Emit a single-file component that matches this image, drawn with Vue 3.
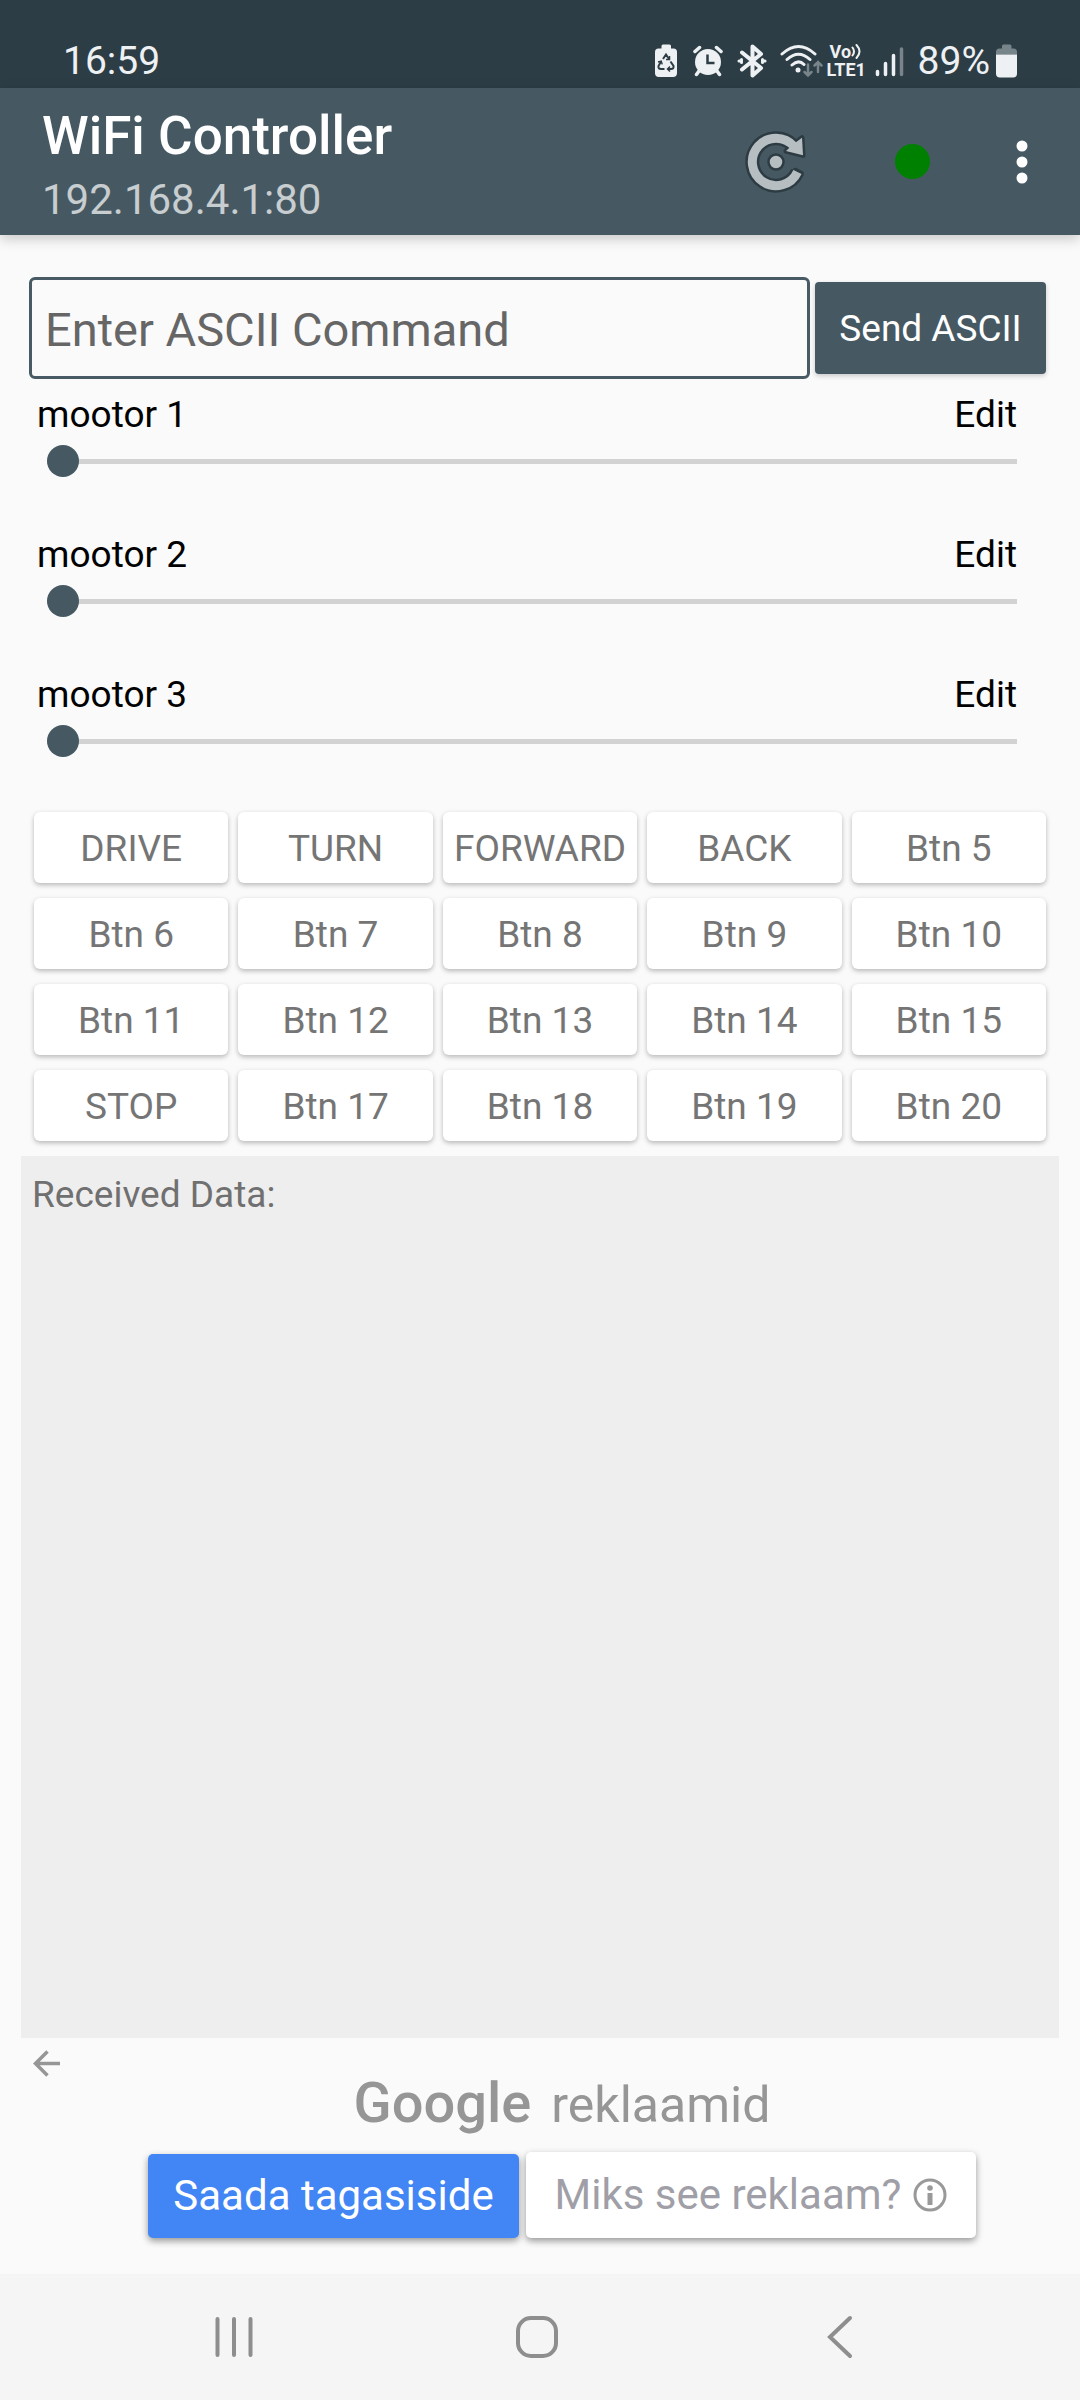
<script setup>
import { ref } from 'vue'

const command = ref('')
const sliders = ref([
  { id: 'motor-1', name: 'mootor 1', value: 0 },
  { id: 'motor-2', name: 'mootor 2', value: 0 },
  { id: 'motor-3', name: 'mootor 3', value: 0 },
])
const named = { 1: 'DRIVE', 2: 'TURN', 3: 'FORWARD', 4: 'BACK', 16: 'STOP' }
const buttons = Array.from({ length: 20 }, (_, i) => named[i + 1] || `Btn ${i + 1}`)
</script>

<template>
  <div class="screen">
    <div class="status">
      <span class="clock">16:59</span>
      <div class="tray">
        <svg class="recycle" width="22" height="34" viewBox="0 0 22 34">
          <path d="M6.500 4.500V2q0-1.500 1.500-1.500h6.500q1.500 0 1.500 1.500v2.500h2.500q3.500 0 3.500 3.500v21q0 4-4 4h-14q-4 0-4-4V8q0-3.500 3.500-3.500z" fill="#eef1f3" />
          <g fill="none" stroke="#2d3d45" stroke-width="2">
            <path d="M8 15l3-4.500 3 4.500M15.500 17.500l3 4.500q.5 3-2.500 3h-3M9.500 25H6q-3 0-2.500-3L6 17.500" />
            <path d="M14.500 12v3.500H11M15 22.500L12.500 25l2.500 2.500M3 18l3.200-.8 1 3.200" stroke-width="1.500" />
          </g>
        </svg>
        <svg class="alarm" width="30" height="32" viewBox="0 0 30 32">
          <circle cx="15" cy="17" r="13" fill="#eef1f3" />
          <path d="M2 6.500L6.500 2.500M28 6.500l-4.500-4M6 26l-2.500 3.500M24 26l2.500 3.500" stroke="#eef1f3" stroke-width="3.500" stroke-linecap="round" />
          <path d="M14.500 9.500v8.500h7" fill="none" stroke="#2d3d45" stroke-width="2.500" />
        </svg>
        <svg class="bt" width="30" height="34" viewBox="0 0 30 34" fill="none" stroke="#eef1f3" stroke-width="4" stroke-linecap="round" stroke-linejoin="round">
          <path d="M5 8.500L24 24l-8.500 7.500V2.500L24 10 5 25.500" />
          <path d="M2 17h2.500M25.500 17H28M4.500 15.500v3M25.500 15.500v3" stroke-width="3" />
        </svg>
        <svg class="wifi" width="44" height="34" viewBox="0 0 44 34" fill="none" stroke="#eef1f3" stroke-width="3" stroke-linecap="round">
          <path d="M2 10Q18.500-5 35 10M7 15.500q11.500-10.500 23 0M12 21q6.500-6 12 -.5" />
          <circle cx="18" cy="26" r="2.500" fill="#eef1f3" stroke="none" />
          <path d="M28 20.500v11M24.500 28l3.500 3.500 3.500-3.500M38 28V18M34.500 21.500L38 18l3.500 3.500" stroke="#77858b" stroke-width="2.500" />
        </svg>
        <span class="volte">
          <span class="vo">Vo<svg width="11" height="17" viewBox="0 0 11 17" fill="none" stroke="#eef1f3" stroke-width="2" stroke-linecap="round"><path d="M1.500 4.500q3 4 0 8M5.500 2q6 6.500 0 13" /></svg></span>
          <span>LTE1</span>
        </span>
        <svg class="signal" width="29" height="31" viewBox="0 0 29 31" stroke="#eef1f3" stroke-width="3.500" stroke-linecap="round">
          <path d="M2.500 25.500v3M10.500 17.500v11M18.500 9.500v19" />
          <path d="M26.500 3v25.500" stroke="#77858b" />
        </svg>
        <span class="percent">89%</span>
        <svg width="22" height="34" viewBox="0 0 22 34">
          <path d="M0 10.500V8q0-3.500 3.500-3.500H6V2Q6 .500 7.500.500h6.500q1.500 0 1.500 1.500v2.500h2q3.500 0 3.500 3.500v2.500z" fill="#77858b" />
          <path d="M0 10.500h21v19q0 4-4 4H4q-4 0-4-4z" fill="#eef1f3" />
        </svg>
      </div>
    </div>

    <header class="appbar">
      <div class="titles">
        <h1>WiFi Controller</h1>
        <p>192.168.4.1:80</p>
      </div>
      <button class="action" aria-label="Reconnect">
        <svg width="64" height="64" viewBox="0 0 64 64">
          <g fill="none" stroke="#2d3b42" stroke-linejoin="round">
            <path d="M54.600 39.300l-3.200 6A23.700 23.700 0 1 1 49 15.200" stroke="none" />
            <path d="M53.500 42A23.700 23.700 0 1 1 48.800 15.200" stroke-width="14" />
            <path d="M51.300 40.300l6 3.200" stroke-width="5" stroke-linecap="round" />
            <path d="M58 7.700L59 25.300 42 21l4.300-4 6-5z" fill="#b6bec2" stroke-width="5" />
          </g>
          <path d="M53.500 42A23.700 23.700 0 1 1 50 16.500" fill="none" stroke="#b6bec2" stroke-width="9" />
          <path d="M58 7.700L59 25.300 42 21l4.300-4 6-5z" fill="#b6bec2" />
          <circle cx="32" cy="32" r="7.500" fill="#b6bec2" stroke="#2d3b42" stroke-width="2.500" />
        </svg>
      </button>
      <button class="action" aria-label="Connected"><span class="dot"></span></button>
      <button class="more" aria-label="More options">
        <svg width="12" height="44" viewBox="0 0 12 44" fill="#fff"><circle cx="6" cy="6" r="5.500" /><circle cx="6" cy="22" r="5.500" /><circle cx="6" cy="38" r="5.500" /></svg>
      </button>
    </header>

    <main>
      <form class="command" @submit.prevent>
        <input v-model="command" type="text" placeholder="Enter ASCII Command" aria-label="ASCII command" />
        <button type="submit">Send ASCII</button>
      </form>

      <div class="sliders">
        <div v-for="s in sliders" :key="s.id" class="slider">
          <div class="row">
            <label :for="s.id">{{ s.name }}</label>
            <button type="button">Edit</button>
          </div>
          <input :id="s.id" v-model="s.value" type="range" min="0" max="100" />
        </div>
      </div>

      <div class="grid">
        <button v-for="b in buttons" :key="b" type="button">{{ b }}</button>
      </div>

      <section class="received">Received Data:</section>
    </main>

    <aside class="ad">
      <button class="ad-back" aria-label="Back">
        <svg width="27" height="27" viewBox="0 0 27 27" fill="none" stroke="#969696" stroke-width="3.500"><path d="M27 13.500H3M14.500 1.500l-12 12 12 12" /></svg>
      </button>
      <div class="ad-body">
        <p class="ad-title"><span class="google">Google</span><span>reklaamid</span></p>
        <div class="ad-actions">
          <button class="feedback">Saada tagasiside</button>
          <button class="why">Miks see reklaam?
            <svg width="34" height="34" viewBox="0 0 34 34"><circle cx="17" cy="17" r="15" fill="none" stroke="#999" stroke-width="3" /><circle cx="17" cy="10" r="2.800" fill="#999" /><path d="M17 15v12" stroke="#999" stroke-width="5" /></svg>
          </button>
        </div>
      </div>
    </aside>

    <nav class="navbar">
      <button aria-label="Recent apps">
        <svg width="44" height="44" viewBox="0 0 44 44" stroke="#8e8e8e" stroke-width="4" stroke-linecap="round"><path d="M5.500 4v36M22 4v36M38.500 4v36" /></svg>
      </button>
      <button aria-label="Home">
        <svg width="44" height="44" viewBox="0 0 44 44" fill="none" stroke="#8e8e8e" stroke-width="4"><rect x="3" y="3" width="38" height="38" rx="13" /></svg>
      </button>
      <button aria-label="Back">
        <svg width="44" height="44" viewBox="0 0 44 44" fill="none" stroke="#8e8e8e" stroke-width="4" stroke-linecap="round"><path d="M32 3L12 22l20 19" /></svg>
      </button>
    </nav>
  </div>
</template>

<style>
body {
  margin: 0;
  background: #fafafa;
}
</style>

<style scoped>
.screen {
  display: flex;
  flex-direction: column;
  min-height: 100vh;
  font-family: Roboto, sans-serif;
  font-size: 37px;
  line-height: 44px;
  color: #000;
}
h1,
p {
  margin: 0;
}
button,
input {
  margin: 0;
  padding: 0;
  border: 0;
  background: none;
  font: inherit;
  color: inherit;
}
svg {
  display: block;
  flex: none;
}

.status {
  display: flex;
  align-items: center;
  justify-content: space-between;
  height: 54px;
  padding: 34px 62px 0 63px;
  background: #2d3d45;
  color: #eef1f3;
  font-size: 39px;
}
.tray {
  display: flex;
  align-items: center;
}
.recycle {
  margin-right: 16px;
}
.alarm {
  margin-right: 14px;
}
.bt {
  margin-right: 13px;
}
.wifi {
  margin-right: 3px;
}
.volte {
  display: flex;
  flex-direction: column;
  width: 40px;
  margin-right: 8px;
  font-size: 18px;
  font-weight: 700;
  line-height: 18px;
}
.vo {
  display: flex;
  padding-left: 3px;
}
.signal {
  margin-right: 14px;
}
.percent {
  margin-right: 6px;
}

.appbar {
  display: flex;
  align-items: center;
  height: 147px;
  padding-right: 16px;
  background: #465963;
  box-shadow: 0 4px 12px rgba(0, 0, 0, 0.2);
}
.titles {
  flex: 1;
  padding: 12px 0 0 42px;
}
h1 {
  font-size: 53px;
  font-weight: 500;
  line-height: 64px;
  color: #fff;
}
.titles p {
  font-size: 42px;
  line-height: 64px;
  color: #c8cdd0;
}
.action,
.more {
  display: flex;
  align-items: center;
  justify-content: center;
  height: 100%;
}
.action {
  width: 136px;
}
.more {
  width: 84px;
}
.dot {
  width: 35px;
  height: 35px;
  border-radius: 50%;
  background: #008000;
}

main {
  display: flex;
  flex: 1;
  flex-direction: column;
  padding-top: 42px;
}
.command {
  display: flex;
  align-items: center;
  gap: 5px;
  padding: 0 34px 0 29px;
}
.command input {
  box-sizing: border-box;
  flex: 1;
  min-width: 0;
  height: 102px;
  padding: 2px 13px 0;
  border: 3px solid #485b65;
  border-radius: 6px;
  font-size: 47px;
}
.command input::placeholder {
  color: #666;
  opacity: 1;
}
.command button {
  width: 231px;
  height: 92px;
  padding-top: 2px;
  border-radius: 4px;
  background: #465963;
  box-shadow: 0 2px 5px rgba(0, 0, 0, 0.2);
  color: #fff;
}

.sliders {
  display: flex;
  flex-direction: column;
  gap: 56px;
  padding: 14px 63px 55px 37px;
}
.slider {
  display: flex;
  flex-direction: column;
  gap: 8px;
}
.row {
  display: flex;
  justify-content: space-between;
}
.slider input {
  height: 32px;
  margin-left: 10px;
  appearance: none;
}
.slider input::-webkit-slider-runnable-track {
  height: 5px;
  background: #d2d2d2;
}
.slider input::-webkit-slider-thumb {
  width: 32px;
  height: 32px;
  margin-top: -14px;
  border-radius: 50%;
  background: #465963;
  appearance: none;
}

.grid {
  display: grid;
  grid-template-columns: repeat(5, 1fr);
  gap: 15px 10px;
  padding: 0 34px 15px;
}
.grid button {
  height: 71px;
  padding-top: 2px;
  border-radius: 6px;
  background: #fff;
  box-shadow: 0 2px 5px rgba(0, 0, 0, 0.27);
  color: #757575;
}
.received {
  flex: 1;
  margin: 0 21px;
  padding: 17px 11px;
  background: #eee;
  color: #707070;
}

.ad {
  display: flex;
  align-items: flex-start;
  height: 236px;
  padding: 0 21px;
}
.ad-back {
  width: 44px;
  padding: 12px 0 0 12px;
}
.ad-body {
  flex: 1;
  padding-top: 35px;
}
.ad-title {
  display: flex;
  align-items: baseline;
  justify-content: center;
  gap: 20px;
  font-size: 50px;
  line-height: 60px;
  color: #969696;
}
.google {
  font-size: 56px;
  font-weight: 500;
}
.ad-actions {
  display: flex;
  align-items: flex-end;
  justify-content: center;
  gap: 7px;
  padding-top: 17px;
  font-size: 42px;
}
.feedback,
.why {
  border-radius: 5px;
  box-shadow: 0 3px 7px rgba(0, 0, 0, 0.4);
}
.feedback {
  width: 371px;
  height: 84px;
  background: #4285f4;
  color: #fff;
}
.why {
  display: flex;
  align-items: center;
  justify-content: center;
  gap: 12px;
  width: 450px;
  height: 86px;
  background: #fff;
  color: #a09fa7;
}

.navbar {
  display: grid;
  grid-template-columns: repeat(3, 1fr);
  height: 126px;
  padding: 0 88px 0 82px;
  background: #f5f5f5;
}
.navbar button {
  display: flex;
  align-items: center;
  justify-content: center;
}
</style>
